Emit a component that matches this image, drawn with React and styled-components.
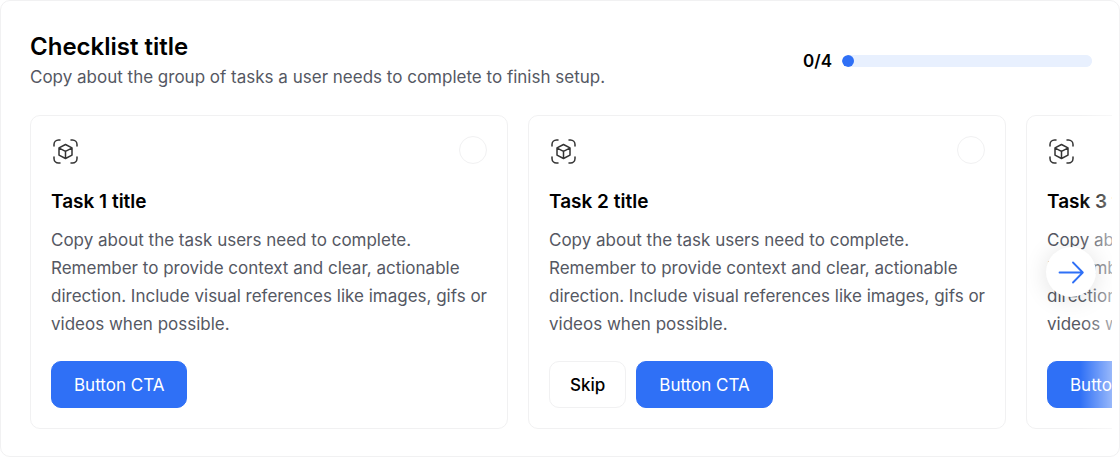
import React, { useState } from 'react';
import styled, { createGlobalStyle } from 'styled-components';

const GlobalStyle = createGlobalStyle`
*{
    box-sizing:border-box;
}
body{
    margin:0;
    background-color:#ffffff;
    color:#000000;
    font-family:Inter, "Liberation Sans", sans-serif;
    font-size:17px;
}
h2, h3, p, ul{
    margin:0;
    padding:0;
}
`

const Panel = styled.section`
border:1px solid #f1f1f2;
border-radius:10px;
padding:30px 7px 27px 29px;
background-color:white;
`
const Header = styled.header`
display:flex;
justify-content:space-between;
align-items:center;
gap:24px;
padding-right:20px;
`
const Title = styled.h2`
font-size:24px;
line-height:32px;
font-weight:600;
`
const Subtitle = styled.p`
line-height:28px;
color:#555863;
`
const ProgressBox = styled.label`
display:flex;
align-items:center;
gap:10px;
font-weight:600;
`
const ProgressBar = styled.progress`
appearance:none;
display:block;
width:250px;
height:12px;
border:none;
border-radius:6px;
overflow:hidden;
background-color:#e8f0fe;
&::-webkit-progress-bar{
    background-color:#e8f0fe;
    border-radius:6px;
}
&::-webkit-progress-value{
    min-width:12px;
    background-color:#2f70f6;
    border-radius:6px;
}`

const Carousel = styled.div`
position:relative;
margin-top:24px;
overflow:hidden;
&::after{
    content:"";
    position:absolute;
    top:0;
    right:0;
    bottom:0;
    width:32px;
    background:linear-gradient(to right, rgba(255,255,255,0), rgba(255,255,255,0.5));
    pointer-events:none;
}`
const TaskList = styled.ul`
display:flex;
gap:20px;
list-style:none;
`
const TaskCard = styled.li`
flex:0 0 478px;
border:1px solid #f1f1f2;
border-radius:10px;
padding:20px;
`
const CardTop = styled.div`
display:flex;
justify-content:space-between;
align-items:flex-start;
`
const Check = styled.input`
appearance:none;
width:28px;
height:28px;
margin:0;
border:1px solid #f1f1f2;
border-radius:50%;
background-color:white;
cursor:pointer;
&:checked{
    background-color:#2f70f6;
}`
const TaskTitle = styled.h3`
margin-top:22px;
font-size:19px;
line-height:28px;
font-weight:600;
`
const TaskCopy = styled.p`
margin-top:10px;
line-height:28px;
color:#555863;
`
const Actions = styled.div`
display:flex;
gap:10px;
margin-top:23px;
`
const Button = styled.button`
height:47px;
padding:0 ${props => props.$primary ? '22px' : '20px'};
border:1px solid ${props => props.$primary ? '#2f70f6' : '#f1f1f2'};
border-radius:10px;
background-color:${props => props.$primary ? '#2f70f6' : 'white'};
color:${props => props.$primary ? 'white' : 'black'};
font-family:inherit;
font-size:17px;
font-weight:${props => props.$primary ? 400 : 500};
white-space:nowrap;
cursor:pointer;
`
const NextButton = styled.button`
position:absolute;
z-index:1;
top:50%;
right:16px;
transform:translateY(-50%);
display:flex;
align-items:center;
justify-content:center;
width:50px;
height:50px;
padding:0;
border:none;
border-radius:50%;
background-color:white;
box-shadow:0 2px 24px rgba(0,0,0,0.12);
cursor:pointer;
`

function CubeIcon (){
    return (
        <svg width="30" height="30" viewBox="0 0 30 30" fill="none" stroke="#333333" strokeWidth="1.5" strokeLinecap="round" strokeLinejoin="round" aria-hidden="true">
            <path d="M3 10V8.500a4.500 4.500 0 0 1 4.500-4.500H9M20 4h1.500A4.500 4.500 0 0 1 26 8.500V10M26 21v1.500a4.500 4.500 0 0 1-4.500 4.500H20M9 27H7.500A4.500 4.500 0 0 1 3 22.500V21" />
            <path d="M14.500 8.500l6.500 3.400v7.200l-6.500 3.400-6.500-3.400v-7.200zM8.200 12.100l6.300 3.200 6.300-3.200M14.500 15.300v7" />
        </svg>
    );
};

function ArrowIcon (){
    return (
        <svg width="26" height="26" viewBox="0 0 26 26" fill="none" stroke="#2f70f6" strokeWidth="1.8" strokeLinecap="round" strokeLinejoin="round" aria-hidden="true">
            <path d="M1.500 13.500h23M15 3.500l9.800 10L15 23.500" />
        </svg>
    );
};

const tasks = [
    { id: 1, title: 'Task 1 title' },
    { id: 2, title: 'Task 2 title', skip: true },
    { id: 3, title: 'Task 3 title' },
    { id: 4, title: 'Task 4 title' },
]

function App (){
    const [done, setDone] = useState([])

    const toggle = (id) => {
        setDone(done.includes(id) ? done.filter(item => item !== id) : [...done, id])
    }

    return (
        <>
        <GlobalStyle />
        <Panel>
            <Header>
                <div>
                    <Title>Checklist title</Title>
                    <Subtitle>Copy about the group of tasks a user needs to complete to finish setup.</Subtitle>
                </div>
                <ProgressBox>
                    {done.length}/{tasks.length}
                    <ProgressBar value={done.length} max={tasks.length} />
                </ProgressBox>
            </Header>
            <Carousel>
                <TaskList>
                    {tasks.map(task => (
                        <TaskCard key={task.id}>
                            <CardTop>
                                <CubeIcon />
                                <Check type="checkbox" aria-label={task.title} checked={done.includes(task.id)} onChange={() => toggle(task.id)} />
                            </CardTop>
                            <TaskTitle>{task.title}</TaskTitle>
                            <TaskCopy>
                                Copy about the task users need to complete. Remember to provide context and clear, actionable direction. Include visual references like images, gifs or videos when possible.
                            </TaskCopy>
                            <Actions>
                                {task.skip && <Button type="button">Skip</Button>}
                                <Button type="button" $primary>Button CTA</Button>
                            </Actions>
                        </TaskCard>
                    ))}
                </TaskList>
                <NextButton type="button" aria-label="Next tasks"><ArrowIcon /></NextButton>
            </Carousel>
        </Panel>
        </>
    );
};
export default App;
